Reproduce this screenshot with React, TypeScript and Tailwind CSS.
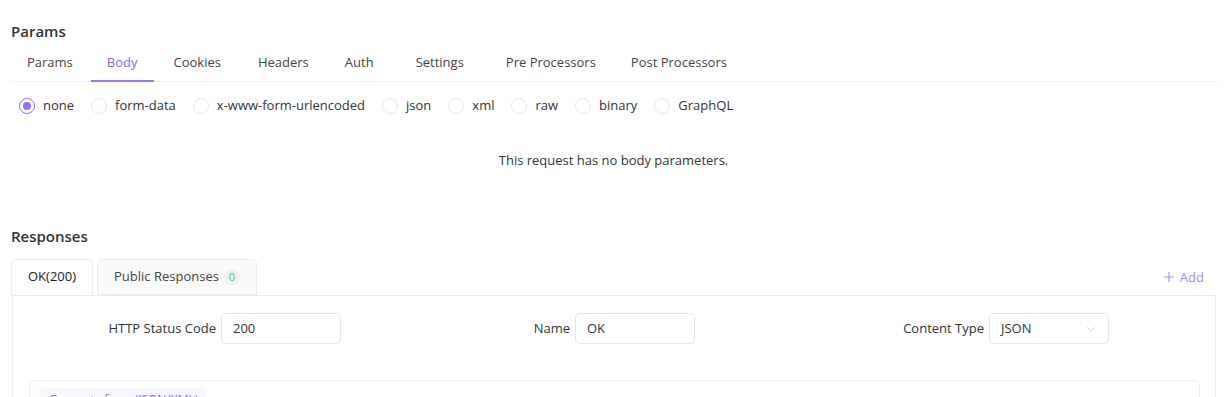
import React, { useState } from 'react'

const tabs = [
  { name: 'Params', cls: '' },
  { name: 'Body', cls: '-ml-[2px]' },
  { name: 'Cookies', cls: '' },
  { name: 'Headers', cls: 'ml-[1px]' },
  { name: 'Auth', cls: '' },
  { name: 'Settings', cls: 'ml-[6px]' },
  { name: 'Pre Processors', cls: 'ml-[6px]' },
  { name: 'Post Processors', cls: '-ml-[1px]' },
]
const bodyTypes = ['none', 'form-data', 'x-www-form-urlencoded', 'json', 'xml', 'raw', 'binary', 'GraphQL']

function Field({ labelWidth, label, value, select }: { labelWidth: string; label: string; value: string; select?: boolean }) {
  return (
    <div className="flex items-center">
      <div className={`${labelWidth} text-right pr-[5px] text-[13px] text-[#333]`}>{label}</div>
      <div className="w-[120px] h-[31px] border border-[#e5e5e5] rounded-[5px] flex items-center justify-between px-[11px] text-[13px] text-[#333]">
        <span>{value}</span>
        {select && (
          <svg width="12" height="12" viewBox="0 0 24 24" fill="none" stroke="#c4c4c4" strokeWidth="1.6" strokeLinecap="round" strokeLinejoin="round">
            <polyline points="5 9 12 16 19 9" />
          </svg>
        )}
      </div>
    </div>
  )
}

export default function App() {
  const [active, setActive] = useState('Body')
  const [bodyType, setBodyType] = useState('none')

  return (
    <div className="w-[1227px] h-[397px] overflow-hidden bg-white px-[11px] pt-[21px] text-[13px] text-[#333]" style={{ fontFamily: '"Open Sans", "Noto Sans", sans-serif' }}>
      <h2 className="text-[15px] font-semibold leading-[20px] text-[#333]">Params</h2>

      {/* request tabs */}
      <div className="mt-[2px] flex gap-[4px] border-b border-[#f0f0f0] mr-[-1px]">
        {tabs.map(t => (
          <button
            key={t.name}
            onClick={() => setActive(t.name)}
            className={`${t.cls} px-4 h-[39px] leading-[39px] text-[13px] border-b-2 -mb-px ${active === t.name ? 'text-[#8f63f5] border-[#9a74f5]' : 'text-[#444] border-transparent'}`}
          >
            {t.name}
          </button>
        ))}
      </div>

      {/* body type radios */}
      <div className="flex items-center h-[24px] mt-[12px] pl-[8px] gap-[17px]">
        {bodyTypes.map(b => (
          <label key={b} className="flex items-center gap-[8px] cursor-pointer" onClick={() => setBodyType(b)}>
            <span className={`w-[16px] h-[16px] rounded-full border flex items-center justify-center ${bodyType === b ? 'border-[#9570f2]' : 'border-[#e6e6e6]'}`}>
              {bodyType === b && <span className="w-[8px] h-[8px] rounded-full bg-[#9570f2]" />}
            </span>
            <span className="text-[13px] text-[#333]">{b}</span>
          </label>
        ))}
      </div>

      <p className="text-center mt-[32px] leading-[20px] text-[13px] text-[#333]">This request has no body parameters.</p>

      <h2 className="mt-[56px] text-[15px] font-semibold leading-[20px] text-[#333]">Responses</h2>

      {/* response tabs */}
      <div className="mt-[13px] flex items-end justify-between">
        <div className="flex gap-[4px]">
          <div className="h-[36px] px-[16px] flex items-center border border-[#ebebeb] border-b-white rounded-t-[5px] bg-white text-[13px] text-[#222] -mb-px relative z-10">
            OK(200)
          </div>
          <div className="h-[36px] px-[16px] flex items-center gap-[5px] border border-[#ebebeb] rounded-t-[5px] bg-[#fafafa] text-[13px] text-[#444]">
            Public Responses
            <span className="w-[16px] h-[16px] rounded-full bg-[#f0f0f0] text-[11px] text-[#3cc9a4] flex items-center justify-center">0</span>
          </div>
        </div>
        <button className="mb-[8px] mr-[12px] flex items-center gap-[5px] text-[13px] text-[#a889f5]">
          <svg width="12" height="12" viewBox="0 0 24 24" fill="none" stroke="currentColor" strokeWidth="2.4" strokeLinecap="round">
            <line x1="12" y1="3" x2="12" y2="21" />
            <line x1="3" y1="12" x2="21" y2="12" />
          </svg>
          Add
        </button>
      </div>

      <div className="ml-[1px] border border-[#ebebeb] h-[200px] pt-[17px]">
        <div className="flex">
          <Field labelWidth="w-[208px]" label="HTTP Status Code" value="200" />
          <Field labelWidth="w-[234px]" label="Name" value="OK" />
          <Field labelWidth="w-[294px]" label="Content Type" value="JSON" select />
        </div>

        <div className="mt-[36px] ml-[16px] mr-[15px] border border-[#f0f0f0] rounded-[5px] pt-[7px] pl-[10px] h-[100px]">
          <div className="inline-block bg-[#f8f6ff] rounded-[4px] px-[9px] py-[3px] text-[12px] leading-[18px] text-[#8f63f5]">
            Generate from (JSON/XML)
          </div>
        </div>
      </div>
    </div>
  )
}
